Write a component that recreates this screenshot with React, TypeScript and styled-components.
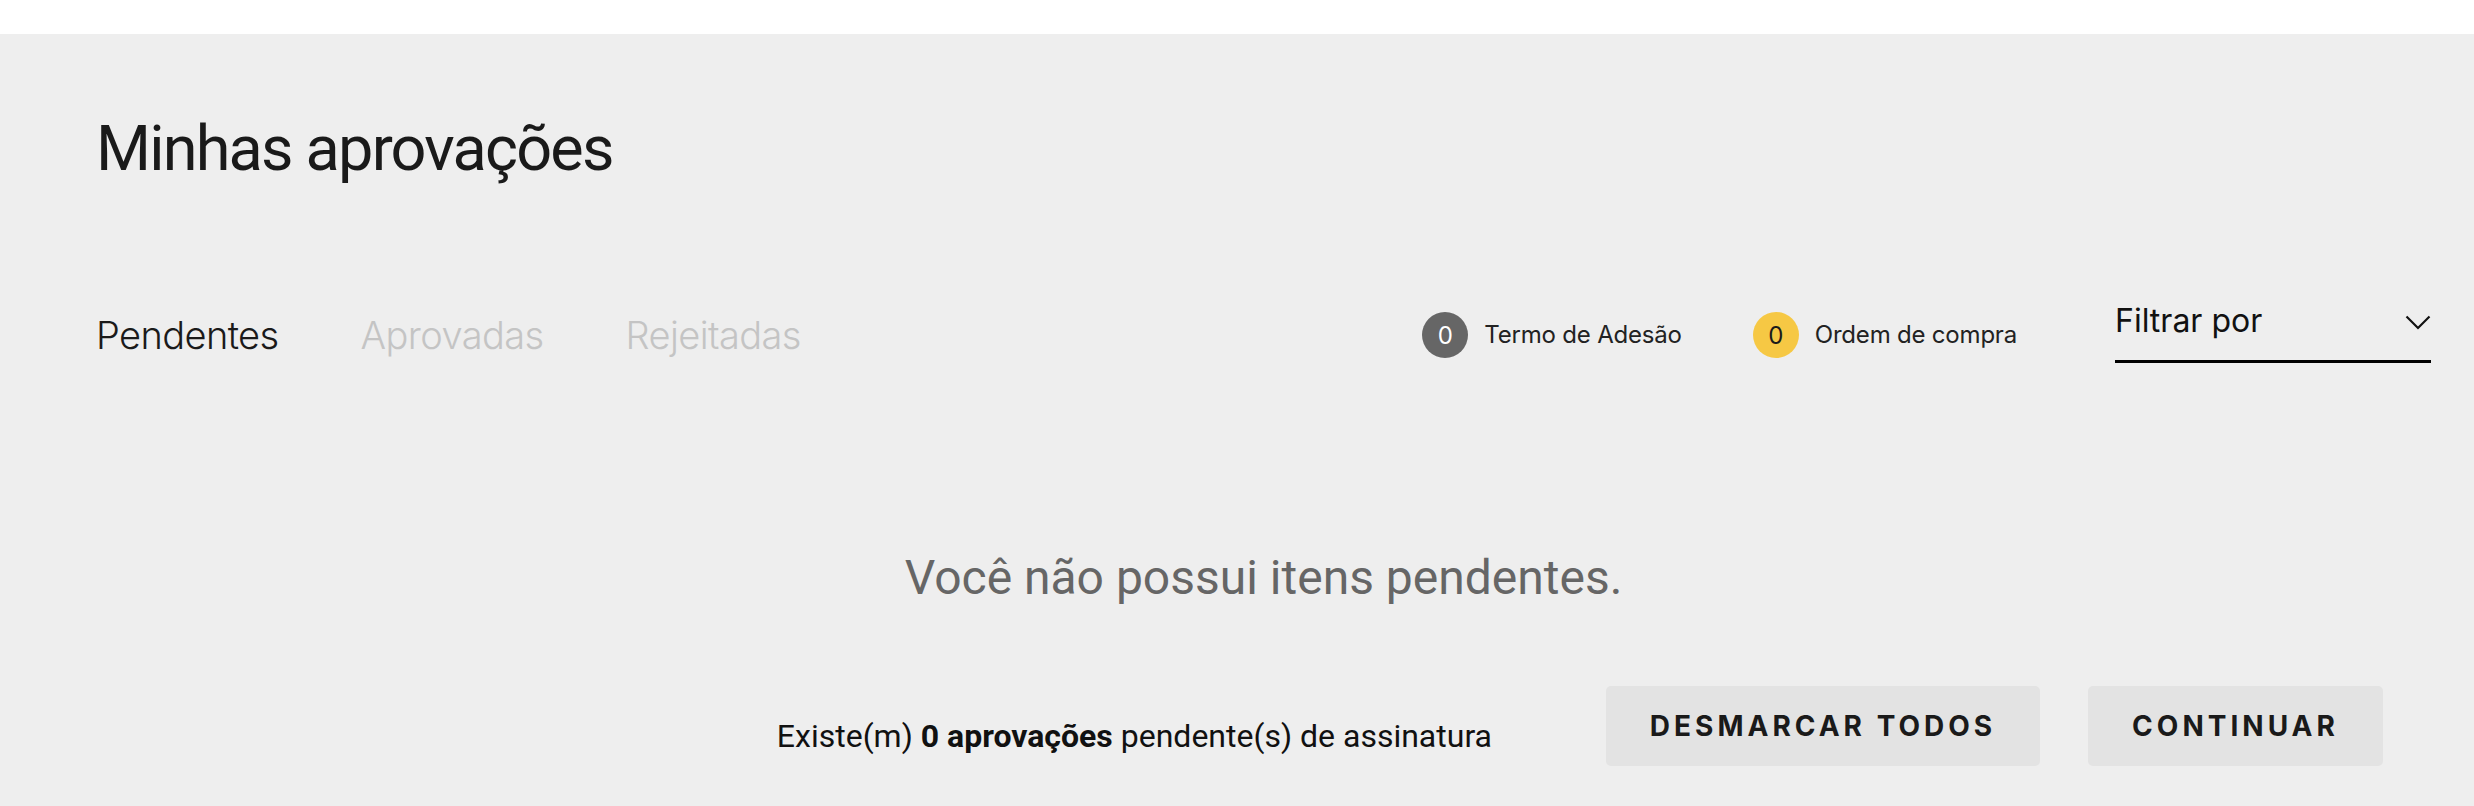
import React from "react";
import styled, { createGlobalStyle } from "styled-components";

const Global = createGlobalStyle`
  * { box-sizing: border-box; }
  html, body { margin: 0; padding: 0; background: #eeeeee; }
  body { font-family: Roboto, "Liberation Sans", sans-serif; }
`;

const TopBar = styled.div`
  height: 34px;
  background: #ffffff;
`;

const Main = styled.main`
  background: #eeeeee;
  padding: 77px 43px 40px 96px;
  min-height: 772px;
`;

const Title = styled.h1`
  margin: 0;
  font-family: Roboto, "Liberation Sans", sans-serif;
  font-weight: 400;
  font-size: 63px;
  line-height: 76px;
  letter-spacing: -1.8px;
  color: #1a1a1a;
`;

const Toolbar = styled.div`
  display: flex;
  align-items: center;
  justify-content: space-between;
  margin-top: 116px;
  height: 64px;
`;

const Tabs = styled.nav`
  display: flex;
  align-items: center;
  gap: 82px;
`;

const Tab = styled.span<{ $active?: boolean }>`
  font-family: Inter, "Noto Sans", sans-serif;
  font-weight: 300;
  font-size: 38px;
  line-height: 46px;
  letter-spacing: -0.6px;
  color: ${(p) => (p.$active ? "#1a1a1a" : "#c4c4c4")};
`;

const Right = styled.div`
  display: flex;
  align-items: center;
`;

const Legend = styled.div<{ $gapAfter: number }>`
  display: flex;
  align-items: center;
  gap: 16px;
  margin-right: ${(p) => p.$gapAfter}px;
`;

const Dot = styled.span<{ $color: string; $text: string }>`
  width: 46px;
  height: 46px;
  border-radius: 50%;
  background: ${(p) => p.$color};
  color: ${(p) => p.$text};
  display: flex;
  align-items: center;
  justify-content: center;
  font-family: Inter, "Noto Sans", sans-serif;
  font-size: 24px;
  font-weight: 400;
`;

const LegendLabel = styled.span`
  font-family: Inter, "Noto Sans", sans-serif;
  font-size: 24px;
  font-weight: 400;
  letter-spacing: -0.2px;
  color: #222222;
  line-height: 30px;
`;

const Select = styled.div`
  width: 316px;
  display: flex;
  align-items: flex-start;
  justify-content: space-between;
  padding-bottom: 19px;
  border-bottom: 3px solid #000000;
  margin-top: -6px;
`;

const SelectLabel = styled.span`
  font-family: Inter, "Noto Sans", sans-serif;
  font-size: 32px;
  font-weight: 400;
  line-height: 40px;
  color: #111111;
`;

const Chevron = styled.svg`
  margin-top: 14px;
  flex: none;
`;

const Empty = styled.p`
  margin: 0;
  margin-top: 183px;
  text-align: center;
  font-family: Roboto, "Liberation Sans", sans-serif;
  font-size: 48px;
  font-weight: 400;
  line-height: 56px;
  color: #666666;
`;

const Footer = styled.div`
  display: flex;
  align-items: center;
  justify-content: flex-end;
  margin-top: 80px;
  padding-right: 48px;
`;

const Summary = styled.p`
  margin: 20px 114px 0 0;
  font-family: Roboto, "Liberation Sans", sans-serif;
  font-size: 32px;
  line-height: 38px;
  color: #111111;
  b { font-weight: 700; }
`;

const Button = styled.button<{ $width: number }>`
  width: ${(p) => p.$width}px;
  height: 80px;
  border: none;
  border-radius: 5px;
  background: #e3e3e3;
  color: #1a1a1a;
  font-family: Inter, "Noto Sans", sans-serif;
  font-weight: 700;
  font-size: 28px;
  letter-spacing: 4px;
  text-transform: uppercase;
  padding: 0;
  & + & { margin-left: 48px; }
`;

export default function App() {
  return (
    <>
      <Global />
      <TopBar />
      <Main>
        <Title>Minhas aprovações</Title>
        <Toolbar>
          <Tabs>
            <Tab $active>Pendentes</Tab>
            <Tab>Aprovadas</Tab>
            <Tab>Rejeitadas</Tab>
          </Tabs>
          <Right>
            <Legend $gapAfter={71}>
              <Dot $color="#666666" $text="#ffffff">0</Dot>
              <LegendLabel>Termo de Adesão</LegendLabel>
            </Legend>
            <Legend $gapAfter={98}>
              <Dot $color="#f6c844" $text="#1a1a1a">0</Dot>
              <LegendLabel>Ordem de compra</LegendLabel>
            </Legend>
            <Select>
              <SelectLabel>Filtrar por</SelectLabel>
              <Chevron width="26" height="15" viewBox="0 0 26 15">
                <polyline points="1.5,1.5 13,13 24.5,1.5" fill="none" stroke="#111" strokeWidth="2.2" />
              </Chevron>
            </Select>
          </Right>
        </Toolbar>
        <Empty>Você não possui itens pendentes.</Empty>
        <Footer>
          <Summary>
            Existe(m) <b>0 aprovações</b> pendente(s) de assinatura
          </Summary>
          <Button $width={434}>Desmarcar todos</Button>
          <Button $width={295}>Continuar</Button>
        </Footer>
      </Main>
    </>
  );
}
